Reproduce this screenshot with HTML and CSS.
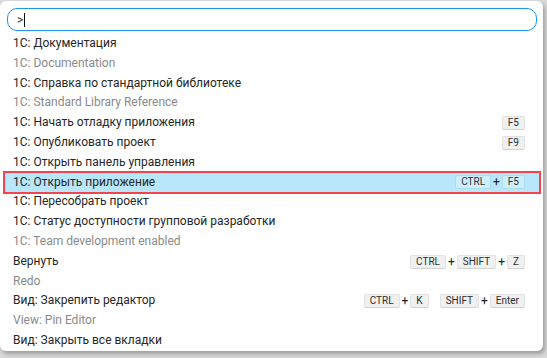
FILE: index.html
```html
<!DOCTYPE html>
<html lang="ru">
<head>
<meta charset="utf-8">
<link rel="stylesheet" href="styles.css">
</head>
<body>
<div class="panel">
  <div class="search"><span class="prompt">&gt;</span><span class="caret"></span></div>
  <div class="list">
    <div class="row"><div class="text"><div class="label">1C: Документация</div><div class="sub">1C: Documentation</div></div></div>
    <div class="row"><div class="text"><div class="label">1C: Справка по стандартной библиотеке</div><div class="sub">1C: Standard Library Reference</div></div></div>
    <div class="row"><div class="text"><div class="label">1C: Начать отладку приложения</div></div><div class="keys"><span class="key">F5</span></div></div>
    <div class="row"><div class="text"><div class="label">1C: Опубликовать проект</div></div><div class="keys"><span class="key">F9</span></div></div>
    <div class="row"><div class="text"><div class="label">1C: Открыть панель управления</div></div></div>
    <div class="row selected"><div class="text"><div class="label">1C: Открыть приложение</div></div><div class="keys"><span class="key">CTRL</span><span class="plus">+</span><span class="key">F5</span></div></div>
    <div class="row"><div class="text"><div class="label">1C: Пересобрать проект</div></div></div>
    <div class="row"><div class="text"><div class="label">1C: Статус доступности групповой разработки</div><div class="sub">1C: Team development enabled</div></div></div>
    <div class="row"><div class="text"><div class="label">Вернуть</div><div class="sub">Redo</div></div><div class="keys"><span class="key">CTRL</span><span class="plus">+</span><span class="key">SHIFT</span><span class="plus">+</span><span class="key">Z</span></div></div>
    <div class="row"><div class="text"><div class="label">Вид: Закрепить редактор</div><div class="sub">View: Pin Editor</div></div><div class="keys"><span class="key">CTRL</span><span class="plus">+</span><span class="key">K</span><span class="gap"></span><span class="key">SHIFT</span><span class="plus">+</span><span class="key">Enter</span></div></div>
    <div class="row"><div class="text"><div class="label">Вид: Закрыть все вкладки</div></div></div>
  </div>
</div>
</body>
</html>
```
FILE: styles.css
```css
html, body {
  margin: 0;
  padding: 0;
}
body {
  width: 547px;
  height: 358px;
  background: #d9d9d9;
  font-family: Roboto, "Noto Sans", sans-serif;
  overflow: hidden;
}
.panel {
  box-sizing: border-box;
  width: 543px;
  height: 350px;
  margin-top: 1px;
  background: #fff;
  border-radius: 6px;
  box-shadow: 2px 3px 4px rgba(0, 0, 0, 0.28);
  padding-top: 7px;
  overflow: hidden;
}
.search {
  box-sizing: border-box;
  margin-left: 7px;
  width: 530px;
  height: 23px;
  border: 1px solid #1e96f0;
  border-radius: 10px;
  display: flex;
  align-items: center;
  padding-left: 9px;
  font-size: 12px;
  color: #333;
}
.caret {
  display: inline-block;
  width: 1px;
  height: 14px;
  background: #111;
  margin-left: 1px;
}
.list {
  margin-top: 3px;
}
.row {
  display: flex;
  align-items: flex-start;
  margin: 0 4px 0 5px;
  padding: 0 14px 0 8px;
  font-size: 12px;
  line-height: 19.8px;
}
.text {
  flex: 1;
}
.label {
  color: #262626;
}
.sub {
  color: #8a8a8a;
}
.selected {
  background: #b8e6fb;
  outline: 2px solid #f4434a;
  outline-offset: 0.5px;
}
.keys {
  display: flex;
  align-items: center;
  height: 19.8px;
}
.key {
  box-sizing: border-box;
  height: 14px;
  padding: 0 5px;
  font-size: 10px;
  line-height: 12px;
  color: #2e2e2e;
  background: #f0f0f0;
  border: 1px solid #e2e2e2;
  border-bottom-color: #d2d2d2;
  border-radius: 2px;
}
.selected .key {
  background: #cdeefc;
  border-color: #b0dcef;
}
.plus {
  font-size: 12px;
  color: #222;
  padding: 0 2px;
  line-height: 14px;
}
.gap {
  width: 11px;
}
```
